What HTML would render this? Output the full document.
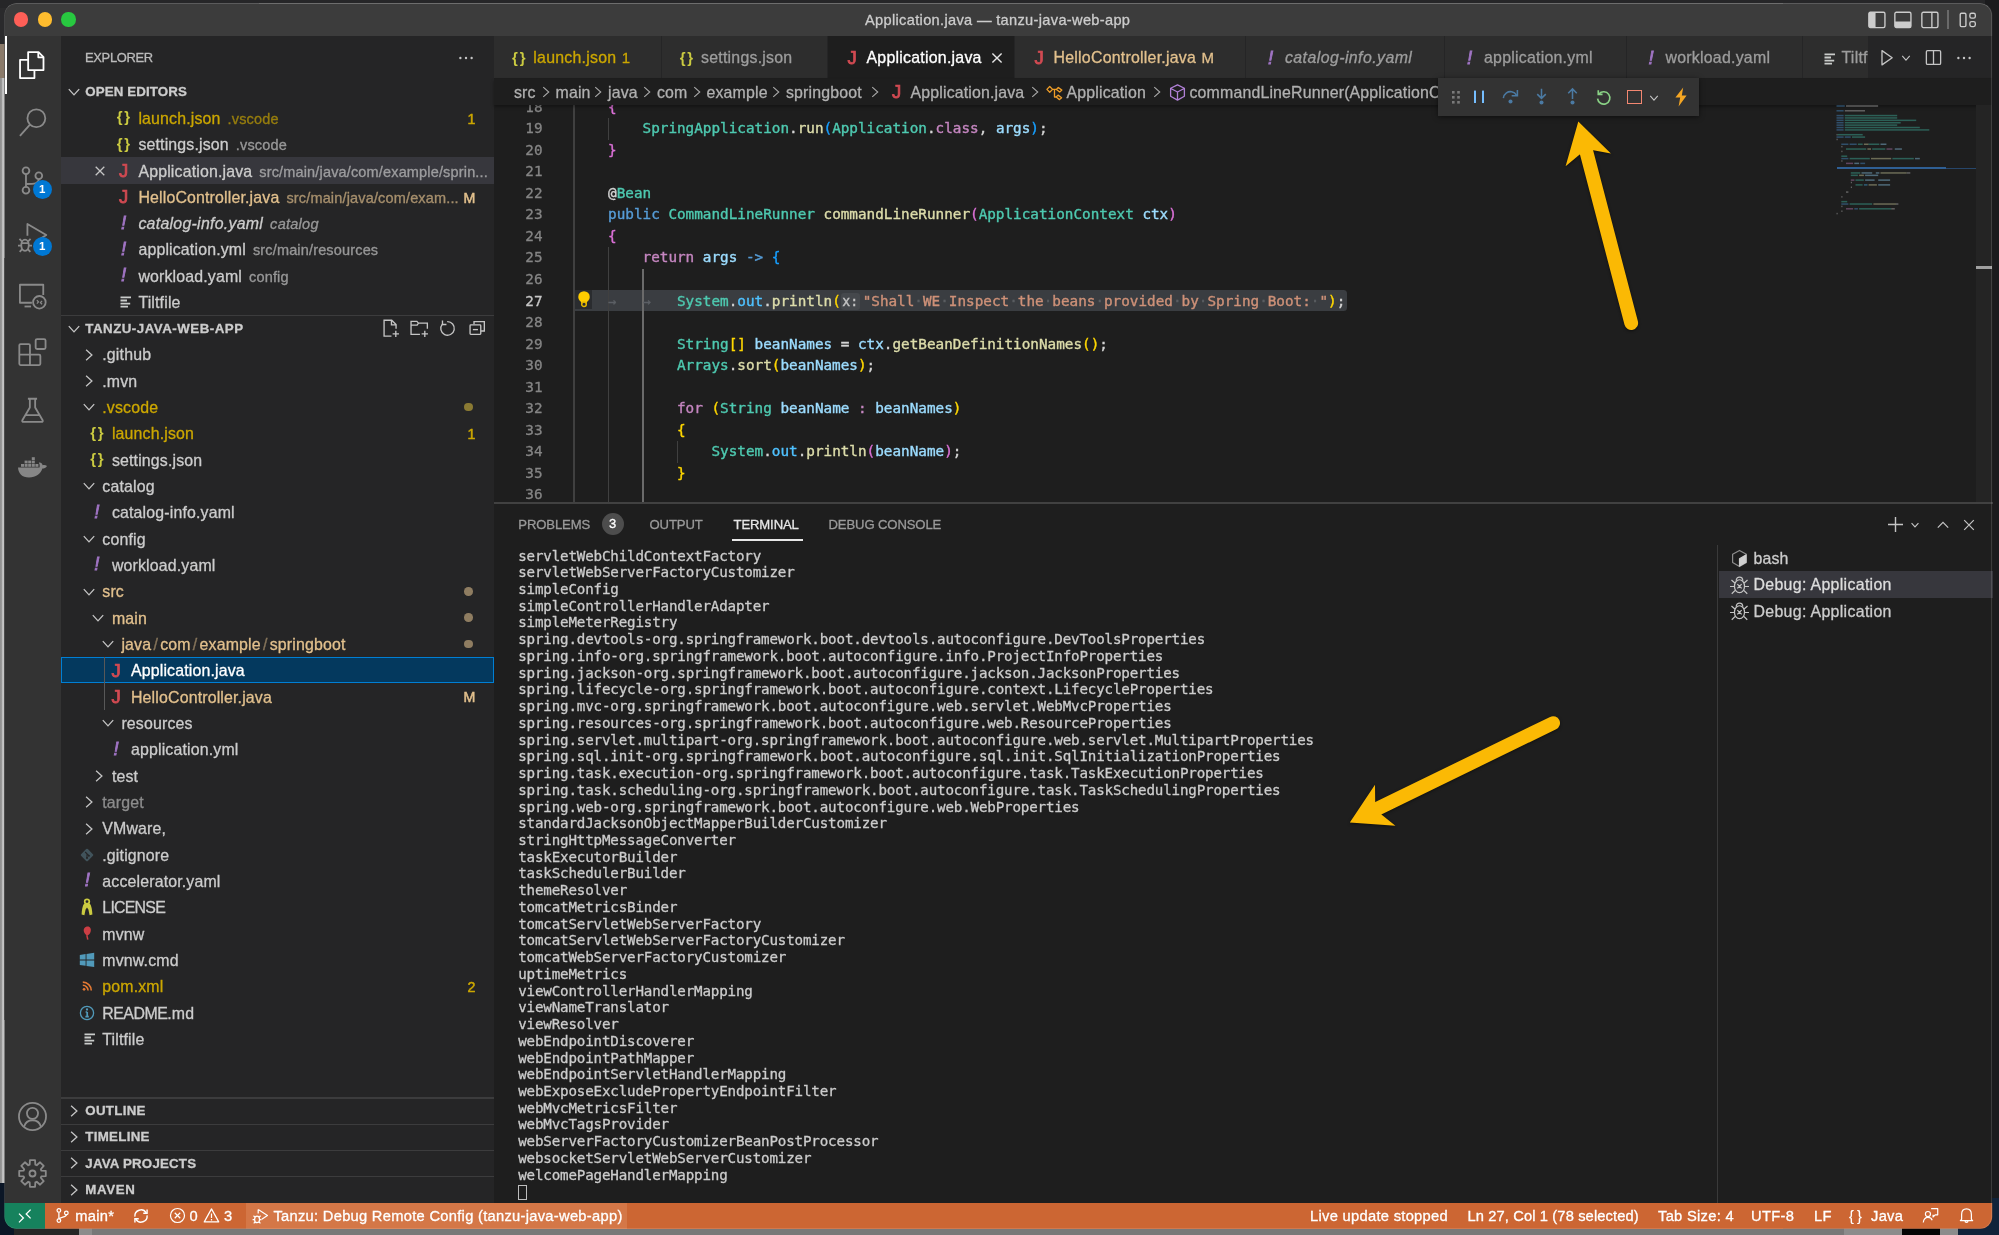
<!DOCTYPE html>
<html lang="en">
<head>
<meta charset="utf-8">
<title>Application.java — tanzu-java-web-app</title>
<style>
*{box-sizing:border-box;margin:0;padding:0}
html,body{width:1999px;height:1235px;overflow:hidden;background:#1c1c1c}
body{-webkit-text-stroke:.3px;position:relative;font-family:"Liberation Sans",sans-serif;color:#ccc;font-size:15.9px;letter-spacing:.16px;-webkit-font-smoothing:antialiased}
.abs{position:absolute}
.win{will-change:transform;position:absolute;left:0;top:0;width:1999px;height:1235px;clip-path:inset(3.2px 6.8px 6.2px 4.4px round 12px);background:#1e1e1e}
.titlebar{position:absolute;left:0;top:0;width:1999px;height:36.2px;background:#3c3c3c}
.title{position:absolute;left:865px;top:10px;height:20px;line-height:20px;font-size:14.6px;letter-spacing:.33px;color:#ccc;white-space:nowrap}
.tl{position:absolute;top:12.3px;width:14.4px;height:14.4px;border-radius:50%}
.actbar{position:absolute;left:0;top:36.2px;width:61.3px;height:1166.5px;background:#333}
.sidebar{position:absolute;left:61.3px;top:36.2px;width:433px;height:1166.5px;background:#252526}
.row{position:absolute;left:61.3px;width:433px;height:26.3px;line-height:26.3px;white-space:nowrap;overflow:hidden}
.row .lbl{position:absolute;top:1.2px}
.desc{opacity:.68;font-size:14.5px;margin-left:7px}
.hdr{position:absolute;left:61.3px;width:433px;height:26.3px;line-height:26.3px;font-size:13.3px;font-weight:700;letter-spacing:.3px;color:#ccc;white-space:nowrap}
.hdr span{position:absolute;left:24px;top:0.5px}
.sep{position:absolute;left:61.3px;width:433px;height:1.2px;background:#3c3c3d}
.ic{position:absolute}
svg{overflow:visible}
.mono{font-family:"DejaVu Sans Mono","Liberation Mono",monospace;letter-spacing:0}
.code{-webkit-text-stroke:.38px;position:absolute;left:573.6px;white-space:pre;font-family:"DejaVu Sans Mono","Liberation Mono",monospace;font-size:14.32px;letter-spacing:0;line-height:21.52px;height:21.52px;color:#d4d4d4}
.ln{-webkit-text-stroke:.3px;position:absolute;left:500px;width:42.5px;text-align:right;font-family:"DejaVu Sans Mono","Liberation Mono",monospace;font-size:14.32px;letter-spacing:0;line-height:21.52px;height:21.52px;color:#858585}
.term{-webkit-text-stroke:.3px;position:absolute;left:518.2px;white-space:pre;font-family:"DejaVu Sans Mono","Liberation Mono",monospace;font-size:14.2px;letter-spacing:-.165px;line-height:16.74px;color:#ccc}
.tab{position:absolute;top:36.2px;height:42.1px;line-height:41.8px;background:#2d2d2d;border-right:1.2px solid #252526;white-space:nowrap;overflow:hidden}
.tab .t{position:absolute;top:0}
.st{position:absolute;top:1202.6px;height:26.3px;line-height:26.3px;font-size:14.7px;letter-spacing:.3px;color:#fff;white-space:nowrap}
.k{color:#569cd6}.c{color:#c586c0}.t{color:#4ec9b0}.f{color:#dcdcaa}.v{color:#9cdcfe}.s{color:#ce9178}.o{color:#4fc1ff}
.b1{color:#ffd700}.b2{color:#da70d6}.b3{color:#179fff}
.y{color:#cca700}.m{color:#e2c08d}.ig{color:#8c8c8c}
</style>

<style>
.mm i{position:absolute;height:1.9px;opacity:.5}
.row i{font-style:normal;opacity:.5;margin:0 2.2px}
.ws{color:#5c6065}.ws u{text-decoration:none;font-size:13.5px;position:relative;top:0px;display:inline-block;width:8.62px}
.code b{font-weight:400;color:#5a5d61}
.hint{background:#45484c;color:#c4c4c4;border-radius:3px;font-size:13.2px;padding:1px 1.5px 1px 1.5px;margin:0 3px 0 0}
</style>
</head>
<body>
<div class="abs" style="left:0;top:0;width:1999px;height:8px;background:#262628"></div>
<div class="abs" style="left:0;top:78px;width:8px;height:1110px;background:linear-gradient(90deg,#8e8e8e 0,#9c9c9c 2px,#c4c4c4 2.6px)"></div>
<div class="abs" style="left:0;top:8px;width:8px;height:36px;background:#2a2a2c"></div>
<div class="abs" style="left:0;top:44px;width:8px;height:34px;background:#8a7a6a"></div>
<div class="abs" style="left:0;top:1183px;width:14px;height:52px;background:#0b1626"></div>
<div class="abs" style="left:14px;top:1222px;width:1945px;height:13px;background:#8c8c8c"></div>
<div class="abs" style="left:14px;top:1222px;width:65px;height:13px;background:#262626"></div>
<div class="abs" style="left:92px;top:1222px;width:1751.5px;height:13px;background:#787878"></div>
<div class="abs" style="left:1902.3px;top:1222px;width:37.5px;height:13px;background:#050505"></div>
<div class="abs" style="left:1958.3px;top:1198px;width:41px;height:37px;background:#11233a"></div>
<div class="abs" style="left:1985px;top:0;width:14px;height:1198px;background:#1b1b1d"></div>
<div class="win">
<div class="titlebar"></div>
<div class="tl" style="left:13.6px;background:#fe5f57"></div>
<div class="tl" style="left:37.5px;background:#febc2e"></div>
<div class="tl" style="left:61.4px;background:#28c840"></div>
<div class="title">Application.java — tanzu-java-web-app</div>
<svg class="abs" style="left:1866.8px;top:9.6px" width="19.8" height="19.8" viewBox="0 0 16 16"><rect x="1.5" y="1.8" width="13" height="12.4" rx="1.2" fill="none" stroke="#cccccc" stroke-width="1.1"/><path d="M1.5 3 Q1.5 1.8 2.7 1.8 H6.9 V14.2 H2.7 Q1.5 14.2 1.5 13Z" fill="#cccccc"/></svg><svg class="abs" style="left:1893.2px;top:9.6px" width="19.8" height="19.8" viewBox="0 0 16 16"><rect x="1.5" y="1.8" width="13" height="12.4" rx="1.2" fill="none" stroke="#cccccc" stroke-width="1.1"/><path d="M1.5 9.2 H14.5 V13 Q14.5 14.2 13.3 14.2 H2.7 Q1.5 14.2 1.5 13Z" fill="#cccccc"/></svg><svg class="abs" style="left:1919.6px;top:9.6px" width="19.8" height="19.8" viewBox="0 0 16 16"><rect x="1.5" y="1.8" width="13" height="12.4" rx="1.2" fill="none" stroke="#cccccc" stroke-width="1.1"/><path d="M9.6 1.8V14.2" stroke="#cccccc" stroke-width="1.1"/></svg><div class="abs" style="left:1947.4px;top:9.6px;width:1.2px;height:19.5px;background:#6a6a6a"></div><svg class="abs" style="left:1957.6px;top:9.6px" width="19.8" height="19.8" viewBox="0 0 16 16"><rect x="1.8" y="2.6" width="4.6" height="10.8" rx="1" fill="none" stroke="#cccccc" stroke-width="1.1"/><rect x="9.6" y="2.6" width="4.4" height="4" rx="1.4" fill="none" stroke="#cccccc" stroke-width="1.1"/><rect x="9.6" y="9.4" width="4.4" height="4" rx="1.4" fill="none" stroke="#cccccc" stroke-width="1.1"/></svg>
<div class="actbar"></div>
<div class="abs" style="left:4.5px;top:36.2px;width:2.4px;height:57.6px;background:#fff"></div>
<svg class="abs" style="left:18.3px;top:51.0px" width="29" height="29" viewBox="0 0 24 24" fill="none" stroke="#ffffff" stroke-width="1.5" stroke-linejoin="round"><path d="M8.4 15.8 V0.9 H17 L21.1 5 V15.8Z"/><path d="M16.8 1.1 V5.2 H20.9"/><path d="M8.2 7.3 H1.7 V22.4 H13.6 V16"/></svg>
<svg class="abs" style="left:18.3px;top:108.0px" width="29" height="29" viewBox="0 0 24 24" fill="none" stroke="#8a8a8a" stroke-width="1.5" stroke-linejoin="round"><circle cx="15.2" cy="8.5" r="7.4"/><path d="M9.9 13.8 L1.6 23.1"/></svg>
<svg class="abs" style="left:18.3px;top:165.5px" width="29" height="29" viewBox="0 0 24 24" fill="none" stroke="#8a8a8a" stroke-width="1.5" stroke-linejoin="round"><circle cx="6.6" cy="3.9" r="2.8"/><circle cx="6.6" cy="20.1" r="2.8"/><circle cx="17.2" cy="8" r="2.8"/><path d="M6.6 6.7 V17.3 M17.2 10.8 C17.2 14.9 13.5 14.9 6.8 14.9"/></svg>
<svg class="abs" style="left:18.3px;top:223.0px" width="29" height="29" viewBox="0 0 24 24" fill="none" stroke="#8a8a8a" stroke-width="1.5" stroke-linejoin="round"><path d="M7.8 10.6 V0.8 L23.4 10 L15.5 15"/><ellipse cx="5.8" cy="18.4" rx="3.1" ry="4.6"/><path d="M3.4 15.4 L1.2 13.2 M8.2 15.4 L10.4 13.2 M2.7 18.8 H0 M8.9 18.8 H11.6 M3.5 21.6 L1.4 23.8 M8.1 21.6 L10.2 23.8 M3 16.6 H8.6"/></svg>
<svg class="abs" style="left:18.3px;top:280.5px" width="29" height="29" viewBox="0 0 24 24" fill="none" stroke="#8a8a8a" stroke-width="1.5" stroke-linejoin="round"><path d="M11.5 18 H1.6 V3.1 H20.9 V11.6"/><path d="M5.4 21.1 H10.8"/><circle cx="17.7" cy="17.6" r="5.2"/><path d="M15.6 15.9 L17 17.3 L15.6 18.7 M19.9 16.5 L18.5 17.9 L19.9 19.3" stroke-width="1.1"/></svg>
<svg class="abs" style="left:18.3px;top:338.0px" width="29" height="29" viewBox="0 0 24 24" fill="none" stroke="#8a8a8a" stroke-width="1.5" stroke-linejoin="round"><path d="M2.1 5.1 H8.9 Q9.9 5.1 9.9 6.1 V13.8 H17.5 Q18.5 13.8 18.5 14.8 V21.4 Q18.5 22.4 17.5 22.4 H2.1 Q1.1 22.4 1.1 21.4 V6.1 Q1.1 5.1 2.1 5.1Z M9.9 13.8 V22.4 M1.1 13.8 H9.9"/><rect x="14.6" y="0.9" width="8.2" height="8.2" rx="1.2"/></svg>
<svg class="abs" style="left:18.3px;top:395.5px" width="29" height="29" viewBox="0 0 24 24" fill="none" stroke="#8a8a8a" stroke-width="1.5" stroke-linejoin="round"><path d="M8.2 2.3 H15.8 M9.8 2.3 V9.5 L3.6 20 C3.2 20.8 3.6 21.4 4.6 21.4 H19.4 C20.4 21.4 20.8 20.8 20.4 20 L14.2 9.5 V2.3 M6.6 15.8 H17.4"/></svg>
<svg class="abs" style="left:17.3px;top:456.0px" width="31" height="24" viewBox="0 0 31 24" fill="#868686"><path d="M1 11.5 H22.5 C23 9.5 22.6 8 21.8 6.8 C23.4 6 25.2 7.4 25.6 9.2 C27 8.8 28.8 9 30 10 C29 12 27 12.6 25.4 12.6 C23.5 18 19 21.5 12 21.5 C5 21.5 1.4 17.5 1 11.5Z"/><rect x="4" y="8" width="3" height="2.8"/><rect x="7.6" y="8" width="3" height="2.8"/><rect x="11.2" y="8" width="3" height="2.8"/><rect x="14.8" y="8" width="3" height="2.8"/><rect x="18.4" y="8" width="3" height="2.8"/><rect x="7.6" y="4.6" width="3" height="2.8"/><rect x="11.2" y="4.6" width="3" height="2.8"/><rect x="14.8" y="4.6" width="3" height="2.8"/><rect x="14.8" y="1.2" width="3" height="2.8"/></svg>
<div class="abs" style="left:32.8px;top:179.9px;width:19px;height:19px;border-radius:50%;background:#0078d4;color:#fff;font-size:11.5px;font-weight:700;-webkit-text-stroke:0;line-height:19px;text-align:center;letter-spacing:0">1</div>
<div class="abs" style="left:32.8px;top:237.3px;width:19px;height:19px;border-radius:50%;background:#0078d4;color:#fff;font-size:11.5px;font-weight:700;-webkit-text-stroke:0;line-height:19px;text-align:center;letter-spacing:0">1</div>
<svg class="abs" style="left:18.3px;top:1101.8px" width="29" height="29" viewBox="0 0 24 24" fill="none" stroke="#8a8a8a" stroke-width="1.5" stroke-linejoin="round"><circle cx="12" cy="12" r="11.2"/><circle cx="12" cy="9.4" r="4.6"/><path d="M5 20.4 C6.2 16.4 9 15.1 12 15.1 C15 15.1 17.8 16.4 19 20.4"/></svg>
<svg class="abs" style="left:18.3px;top:1159.0px" width="29" height="29" viewBox="0 0 24 24" fill="none" stroke="#8a8a8a" stroke-width="1.5" stroke-linejoin="round"><path d="M9.65 4.67 L9.88 1.00 L14.12 1.00 L14.35 4.67 L15.52 5.15 L18.28 2.73 L21.27 5.72 L18.85 8.48 L19.33 9.65 L23.00 9.88 L23.00 14.12 L19.33 14.35 L18.85 15.52 L21.27 18.28 L18.28 21.27 L15.52 18.85 L14.35 19.33 L14.12 23.00 L9.88 23.00 L9.65 19.33 L8.48 18.85 L5.72 21.27 L2.73 18.28 L5.15 15.52 L4.67 14.35 L1.00 14.12 L1.00 9.88 L4.67 9.65 L5.15 8.48 L2.73 5.72 L5.72 2.73 L8.48 5.15Z"/><circle cx="12" cy="12" r="2.5"/></svg>
<div class="sidebar"></div>
<div class="abs" style="left:85px;top:47px;height:21px;line-height:21px;font-size:12.9px;letter-spacing:-.3px;color:#bbbbbb">EXPLORER</div>
<svg class="abs" style="left:457px;top:49px" width="18" height="18" viewBox="0 0 16 16" fill="#c5c5c5"><circle cx="3" cy="8" r="1.05"/><circle cx="8" cy="8" r="1.05"/><circle cx="13" cy="8" r="1.05"/></svg>
<div class="hdr" style="top:78.5px;letter-spacing:0.12px"><span>OPEN EDITORS</span></div><svg class="abs" style="left:65.5px;top:84.0px" width="16" height="16" viewBox="0 0 16 16"><path d="M2.80 5.10 L8 10.90 L13.20 5.10" fill="none" stroke="#c5c5c5" stroke-width="1.3"/></svg>
<span class="abs" style="left:111.5px;top:104.4px;width:24px;height:26px;line-height:26px;text-align:center;font-size:15px;font-weight:700;-webkit-text-stroke:0;letter-spacing:1.7px;text-indent:1.7px;color:#cbcb41">{}</span>
<div class="row" style="top:104.8px"><span class="lbl y" style="left:77.1px;">launch.json<span class="desc">.vscode</span></span></div>
<div class="abs y" style="left:435px;top:105.6px;width:40.3px;height:26.3px;line-height:26.3px;text-align:right;font-size:14.2px;font-weight:400;-webkit-text-stroke:.5px;letter-spacing:0">1</div>
<span class="abs" style="left:111.5px;top:130.7px;width:24px;height:26px;line-height:26px;text-align:center;font-size:15px;font-weight:700;-webkit-text-stroke:0;letter-spacing:1.7px;text-indent:1.7px;color:#cbcb41">{}</span>
<div class="row" style="top:131.1px"><span class="lbl " style="left:77.1px;">settings.json<span class="desc">.vscode</span></span></div>
<div class="abs" style="left:61.3px;top:157.4px;width:433px;height:26.3px;background:#37373d"></div>
<svg class="abs" style="left:91.5px;top:162.9px" width="16" height="16" viewBox="0 0 16 16"><path d="M3.7 3.7 L12.3 12.3 M12.3 3.7 L3.7 12.3" fill="none" stroke="#c5c5c5" stroke-width="1.3"/></svg>
<span class="abs" style="left:111.5px;top:157.8px;width:24px;height:26px;line-height:26px;text-align:center;font-size:18.5px;font-weight:400;-webkit-text-stroke:.75px;letter-spacing:0;color:#d14a52">J</span>
<div class="row" style="top:157.4px"><span class="lbl " style="left:77.1px;">Application.java<span class="desc">src/main/java/com/example/sprin...</span></span></div>
<span class="abs" style="left:111.5px;top:184.1px;width:24px;height:26px;line-height:26px;text-align:center;font-size:18.5px;font-weight:400;-webkit-text-stroke:.75px;letter-spacing:0;color:#d14a52">J</span>
<div class="row" style="top:183.7px"><span class="lbl m" style="left:77.1px;">HelloController.java<span class="desc">src/main/java/com/exam...</span></span></div>
<div class="abs m" style="left:435px;top:184.5px;width:40.3px;height:26.3px;line-height:26.3px;text-align:right;font-size:14.2px;font-weight:400;-webkit-text-stroke:.5px;letter-spacing:0">M</div>
<span class="abs" style="left:111.5px;top:209.6px;width:24px;height:26px;line-height:26px;text-align:center;font-size:18.5px;font-weight:400;-webkit-text-stroke:.8px;font-style:italic;letter-spacing:0;color:#a074c4">!</span>
<div class="row" style="top:210.0px"><span class="lbl " style="left:77.1px;font-style:italic;letter-spacing:.27px;">catalog-info.yaml<span class="desc">catalog</span></span></div>
<span class="abs" style="left:111.5px;top:235.9px;width:24px;height:26px;line-height:26px;text-align:center;font-size:18.5px;font-weight:400;-webkit-text-stroke:.8px;font-style:italic;letter-spacing:0;color:#a074c4">!</span>
<div class="row" style="top:236.3px"><span class="lbl " style="left:77.1px;">application.yml<span class="desc">src/main/resources</span></span></div>
<span class="abs" style="left:111.5px;top:262.1px;width:24px;height:26px;line-height:26px;text-align:center;font-size:18.5px;font-weight:400;-webkit-text-stroke:.8px;font-style:italic;letter-spacing:0;color:#a074c4">!</span>
<div class="row" style="top:262.6px"><span class="lbl " style="left:77.1px;">workload.yaml<span class="desc">config</span></span></div>
<svg class="abs" style="left:119.3px;top:295.4px" width="14" height="14" viewBox="0 0 14 14"><path d="M1.5 2.4H12 M1.5 5.5H8 M1.5 8.6H11.2 M1.5 11.7H9" stroke="#c9ccca" stroke-width="1.8" fill="none"/></svg>
<div class="row" style="top:288.9px"><span class="lbl " style="left:77.1px;">Tiltfile</span></div>
<div class="sep" style="top:315.2px"></div>
<div class="hdr" style="top:315.2px;letter-spacing:0.5px"><span>TANZU-JAVA-WEB-APP</span></div><svg class="abs" style="left:65.5px;top:320.7px" width="16" height="16" viewBox="0 0 16 16"><path d="M2.80 5.10 L8 10.90 L13.20 5.10" fill="none" stroke="#c5c5c5" stroke-width="1.3"/></svg>
<svg class="abs" style="left:380.4px;top:318.2px" width="20.4" height="20.4" viewBox="0 0 16 16" fill="none" stroke="#c5c5c5" stroke-width="1.05"><path d="M9 14.2 H3.2 V1.8 H9.2 L12.6 5.2 V8.4 M9 2 V5.4 H12.4"/><path d="M12.4 10 V15 M9.9 12.5 H14.9"/></svg>
<svg class="abs" style="left:408.9px;top:318.2px" width="20.4" height="20.4" viewBox="0 0 16 16" fill="none" stroke="#c5c5c5" stroke-width="1.05"><path d="M8.6 12.8 H1.6 V2.6 H6.2 L7.4 4 H14.4 V8.4 M1.6 5.6 H6.4 L7.4 4"/><path d="M12.4 10 V15 M9.9 12.5 H14.9"/></svg>
<svg class="abs" style="left:437.4px;top:318.2px" width="20.4" height="20.4" viewBox="0 0 16 16" fill="none" stroke="#c5c5c5" stroke-width="1.05"><path d="M4.2 4.8 A5.3 5.3 0 1 0 8 2.9"/><path d="M4.3 2 V5.1 H7.4"/></svg>
<svg class="abs" style="left:466.9px;top:318.2px" width="20.4" height="20.4" viewBox="0 0 16 16" fill="none" stroke="#c5c5c5" stroke-width="1.05"><path d="M5.5 5 V2.8 H13.6 V10.2 H11"/><rect x="2.4" y="5.4" width="8.4" height="7.4" rx=".6"/><path d="M4.6 9.1 H8.6"/></svg>
<svg class="abs" style="left:81.3px;top:346.6px" width="16" height="16" viewBox="0 0 16 16"><path d="M5.10 2.80 L10.90 8 L5.10 13.20" fill="none" stroke="#c5c5c5" stroke-width="1.3"/></svg>
<div class="row" style="top:341.1px"><span class="lbl " style="left:41.0px;">.github</span></div>
<svg class="abs" style="left:81.3px;top:372.9px" width="16" height="16" viewBox="0 0 16 16"><path d="M5.10 2.80 L10.90 8 L5.10 13.20" fill="none" stroke="#c5c5c5" stroke-width="1.3"/></svg>
<div class="row" style="top:367.4px"><span class="lbl " style="left:41.0px;">.mvn</span></div>
<svg class="abs" style="left:80.8px;top:399.2px" width="16" height="16" viewBox="0 0 16 16"><path d="M2.80 5.10 L8 10.90 L13.20 5.10" fill="none" stroke="#c5c5c5" stroke-width="1.3"/></svg>
<div class="row" style="top:393.8px"><span class="lbl y" style="left:41.0px;">.vscode</span></div>
<div class="abs" style="left:464px;top:402.6px;width:8.6px;height:8.6px;border-radius:50%;background:#8a7a33"></div>
<span class="abs" style="left:84.9px;top:419.7px;width:24px;height:26px;line-height:26px;text-align:center;font-size:15px;font-weight:700;-webkit-text-stroke:0;letter-spacing:1.7px;text-indent:1.7px;color:#cbcb41">{}</span>
<div class="row" style="top:420.1px"><span class="lbl y" style="left:50.6px;">launch.json</span></div>
<div class="abs y" style="left:435px;top:420.9px;width:40.3px;height:26.336px;line-height:26.336px;text-align:right;font-size:14.2px;font-weight:400;-webkit-text-stroke:.5px;letter-spacing:0">1</div>
<span class="abs" style="left:84.9px;top:446.0px;width:24px;height:26px;line-height:26px;text-align:center;font-size:15px;font-weight:700;-webkit-text-stroke:0;letter-spacing:1.7px;text-indent:1.7px;color:#cbcb41">{}</span>
<div class="row" style="top:446.4px"><span class="lbl " style="left:50.6px;">settings.json</span></div>
<svg class="abs" style="left:80.8px;top:478.2px" width="16" height="16" viewBox="0 0 16 16"><path d="M2.80 5.10 L8 10.90 L13.20 5.10" fill="none" stroke="#c5c5c5" stroke-width="1.3"/></svg>
<div class="row" style="top:472.8px"><span class="lbl " style="left:41.0px;">catalog</span></div>
<span class="abs" style="left:84.9px;top:498.7px;width:24px;height:26px;line-height:26px;text-align:center;font-size:18.5px;font-weight:400;-webkit-text-stroke:.8px;font-style:italic;letter-spacing:0;color:#a074c4">!</span>
<div class="row" style="top:499.1px"><span class="lbl " style="left:50.6px;">catalog-info.yaml</span></div>
<svg class="abs" style="left:80.8px;top:530.9px" width="16" height="16" viewBox="0 0 16 16"><path d="M2.80 5.10 L8 10.90 L13.20 5.10" fill="none" stroke="#c5c5c5" stroke-width="1.3"/></svg>
<div class="row" style="top:525.5px"><span class="lbl " style="left:41.0px;">config</span></div>
<span class="abs" style="left:84.9px;top:551.4px;width:24px;height:26px;line-height:26px;text-align:center;font-size:18.5px;font-weight:400;-webkit-text-stroke:.8px;font-style:italic;letter-spacing:0;color:#a074c4">!</span>
<div class="row" style="top:551.8px"><span class="lbl " style="left:50.6px;">workload.yaml</span></div>
<svg class="abs" style="left:80.8px;top:583.6px" width="16" height="16" viewBox="0 0 16 16"><path d="M2.80 5.10 L8 10.90 L13.20 5.10" fill="none" stroke="#c5c5c5" stroke-width="1.3"/></svg>
<div class="row" style="top:578.1px"><span class="lbl m" style="left:41.0px;">src</span></div>
<div class="abs" style="left:464px;top:587.0px;width:8.6px;height:8.6px;border-radius:50%;background:#8f7d61"></div>
<svg class="abs" style="left:90.4px;top:609.9px" width="16" height="16" viewBox="0 0 16 16"><path d="M2.80 5.10 L8 10.90 L13.20 5.10" fill="none" stroke="#c5c5c5" stroke-width="1.3"/></svg>
<div class="row" style="top:604.5px"><span class="lbl m" style="left:50.6px;">main</span></div>
<div class="abs" style="left:464px;top:613.3px;width:8.6px;height:8.6px;border-radius:50%;background:#8f7d61"></div>
<svg class="abs" style="left:99.9px;top:636.3px" width="16" height="16" viewBox="0 0 16 16"><path d="M2.80 5.10 L8 10.90 L13.20 5.10" fill="none" stroke="#c5c5c5" stroke-width="1.3"/></svg>
<div class="row" style="top:630.8px"><span class="lbl m" style="left:60.1px;">java<i>/</i>com<i>/</i>example<i>/</i>springboot</span></div>
<div class="abs" style="left:464px;top:639.7px;width:8.6px;height:8.6px;border-radius:50%;background:#8f7d61"></div>
<div class="abs" style="left:61.3px;top:657.1px;width:433px;height:26.336px;background:#04395e;border:1.3px solid #007fd4"></div>
<span class="abs" style="left:104.0px;top:657.5px;width:24px;height:26px;line-height:26px;text-align:center;font-size:18.5px;font-weight:400;-webkit-text-stroke:.75px;letter-spacing:0;color:#d14a52">J</span>
<div class="row" style="top:657.1px"><span class="lbl " style="left:69.7px;color:#fff;">Application.java</span></div>
<span class="abs" style="left:104.0px;top:683.8px;width:24px;height:26px;line-height:26px;text-align:center;font-size:18.5px;font-weight:400;-webkit-text-stroke:.75px;letter-spacing:0;color:#d14a52">J</span>
<div class="row" style="top:683.5px"><span class="lbl m" style="left:69.7px;">HelloController.java</span></div>
<div class="abs m" style="left:435px;top:684.3px;width:40.3px;height:26.336px;line-height:26.336px;text-align:right;font-size:14.2px;font-weight:400;-webkit-text-stroke:.5px;letter-spacing:0">M</div>
<svg class="abs" style="left:99.9px;top:715.3px" width="16" height="16" viewBox="0 0 16 16"><path d="M2.80 5.10 L8 10.90 L13.20 5.10" fill="none" stroke="#c5c5c5" stroke-width="1.3"/></svg>
<div class="row" style="top:709.8px"><span class="lbl " style="left:60.1px;">resources</span></div>
<span class="abs" style="left:104.0px;top:735.7px;width:24px;height:26px;line-height:26px;text-align:center;font-size:18.5px;font-weight:400;-webkit-text-stroke:.8px;font-style:italic;letter-spacing:0;color:#a074c4">!</span>
<div class="row" style="top:736.1px"><span class="lbl " style="left:69.7px;">application.yml</span></div>
<svg class="abs" style="left:90.9px;top:767.9px" width="16" height="16" viewBox="0 0 16 16"><path d="M5.10 2.80 L10.90 8 L5.10 13.20" fill="none" stroke="#c5c5c5" stroke-width="1.3"/></svg>
<div class="row" style="top:762.5px"><span class="lbl " style="left:50.6px;">test</span></div>
<svg class="abs" style="left:81.3px;top:794.3px" width="16" height="16" viewBox="0 0 16 16"><path d="M5.10 2.80 L10.90 8 L5.10 13.20" fill="none" stroke="#c5c5c5" stroke-width="1.3"/></svg>
<div class="row" style="top:788.8px"><span class="lbl ig" style="left:41.0px;">target</span></div>
<svg class="abs" style="left:81.3px;top:820.6px" width="16" height="16" viewBox="0 0 16 16"><path d="M5.10 2.80 L10.90 8 L5.10 13.20" fill="none" stroke="#c5c5c5" stroke-width="1.3"/></svg>
<div class="row" style="top:815.1px"><span class="lbl " style="left:41.0px;">VMware,</span></div>
<svg class="abs" style="left:79.3px;top:846.7px" width="16" height="16" viewBox="0 0 16 16"><rect x="3.2" y="3.2" width="9.6" height="9.6" rx="1.2" transform="rotate(45 8 8)" fill="#41535b"/><path d="M6.2 5 L9.8 8.6 M8 6.6 V11" stroke="#252526" stroke-width="1.1" fill="none"/><circle cx="9.9" cy="8.7" r="1" fill="#252526"/><circle cx="8" cy="11" r="1" fill="#252526"/></svg>
<div class="row" style="top:841.5px"><span class="lbl " style="left:41.0px;">.gitignore</span></div>
<span class="abs" style="left:75.3px;top:867.4px;width:24px;height:26px;line-height:26px;text-align:center;font-size:18.5px;font-weight:400;-webkit-text-stroke:.8px;font-style:italic;letter-spacing:0;color:#a074c4">!</span>
<div class="row" style="top:867.8px"><span class="lbl " style="left:41.0px;">accelerator.yaml</span></div>
<svg class="abs" style="left:81.3px;top:898.1px" width="12" height="18" viewBox="0 0 12 18"><circle cx="6" cy="3.6" r="2.3" fill="none" stroke="#cbcb41" stroke-width="1.7"/><path d="M3.2 5.6 H8.8 C10.6 8 11.2 12 11.4 16.6 L8.6 17.2 L7.4 11.6 L6 9.6 L4.6 11.6 L3.4 17.2 L0.6 16.6 C0.8 12 1.4 8 3.2 5.6Z" fill="#cbcb41"/></svg>
<div class="row" style="top:894.2px"><span class="lbl " style="left:41.0px;"><span style="letter-spacing:-.75px">LICENSE</span></span></div>
<svg class="abs" style="left:81.3px;top:925.5px" width="12" height="16" viewBox="0 0 12 16"><path d="M6.6 0.6 C9.4 0.6 10.4 3.2 9.6 5.8 C9 7.8 7.6 9.2 6.4 9.6 C4.8 9 3.2 7.4 2.8 5.2 C2.4 2.8 4 0.6 6.6 0.6Z" fill="#cc3e44"/><path d="M6.2 9.2 C5.4 10.6 7 11.6 6.6 13.6" stroke="#cc3e44" stroke-width="1.5" fill="none"/></svg>
<div class="row" style="top:920.5px"><span class="lbl " style="left:41.0px;">mvnw</span></div>
<svg class="abs" style="left:79.3px;top:952.0px" width="16" height="16" viewBox="0 0 16 16"><path d="M0.8 3 L6.6 2.1 V7.5 H0.8Z M7.5 2 L15.2 0.8 V7.5 H7.5Z M0.8 8.4 H6.6 V13.8 L0.8 12.9Z M7.5 8.4 H15.2 V15.1 L7.5 13.9Z" fill="#519aba"/></svg>
<div class="row" style="top:946.8px"><span class="lbl " style="left:41.0px;">mvnw.cmd</span></div>
<svg class="abs" style="left:82.1px;top:980.9px" width="10.4" height="10.4" viewBox="0 0 13 13"><circle cx="2.6" cy="10.4" r="1.7" fill="#e37933"/><path d="M1 5.4 A6.6 6.6 0 0 1 7.6 12 M1 1.4 A10.6 10.6 0 0 1 11.6 12" fill="none" stroke="#e37933" stroke-width="2"/></svg>
<div class="row" style="top:973.2px"><span class="lbl y" style="left:41.0px;">pom.xml</span></div>
<div class="abs y" style="left:435px;top:974.0px;width:40.3px;height:26.336px;line-height:26.336px;text-align:right;font-size:14.2px;font-weight:400;-webkit-text-stroke:.5px;letter-spacing:0">2</div>
<svg class="abs" style="left:79.3px;top:1004.7px" width="16" height="16" viewBox="0 0 16 16"><circle cx="8" cy="8" r="6.6" fill="none" stroke="#519aba" stroke-width="1.3"/><path d="M8.2 6.9 V11.6 M6.4 11.7 H9.8 M6.6 7 H8.2" stroke="#519aba" stroke-width="1.7" fill="none"/><circle cx="8" cy="4.5" r="1.15" fill="#519aba"/></svg>
<div class="row" style="top:999.5px"><span class="lbl " style="left:41.0px;"><span style="letter-spacing:-.5px">README</span>.md</span></div>
<svg class="abs" style="left:83.1px;top:1032.4px" width="14" height="14" viewBox="0 0 14 14"><path d="M1.5 2.4H12 M1.5 5.5H8 M1.5 8.6H11.2 M1.5 11.7H9" stroke="#c9ccca" stroke-width="1.8" fill="none"/></svg>
<div class="row" style="top:1025.8px"><span class="lbl " style="left:41.0px;">Tiltfile</span></div>
<div class="abs" style="left:104.0px;top:657.1px;width:1.2px;height:52.7px;background:#585858"></div>
<div class="sep" style="top:1097.4px"></div>
<div class="hdr" style="top:1097.4px;letter-spacing:0.3px"><span>OUTLINE</span></div><svg class="abs" style="left:65.8px;top:1102.8px" width="16" height="16" viewBox="0 0 16 16"><path d="M5.10 2.80 L10.90 8 L5.10 13.20" fill="none" stroke="#c5c5c5" stroke-width="1.3"/></svg>
<div class="sep" style="top:1123.7px"></div>
<div class="hdr" style="top:1123.7px;letter-spacing:0.3px"><span>TIMELINE</span></div><svg class="abs" style="left:65.8px;top:1129.1px" width="16" height="16" viewBox="0 0 16 16"><path d="M5.10 2.80 L10.90 8 L5.10 13.20" fill="none" stroke="#c5c5c5" stroke-width="1.3"/></svg>
<div class="sep" style="top:1150.0px"></div>
<div class="hdr" style="top:1150.0px;letter-spacing:0.2px"><span>JAVA PROJECTS</span></div><svg class="abs" style="left:65.8px;top:1155.4px" width="16" height="16" viewBox="0 0 16 16"><path d="M5.10 2.80 L10.90 8 L5.10 13.20" fill="none" stroke="#c5c5c5" stroke-width="1.3"/></svg>
<div class="sep" style="top:1176.3px"></div>
<div class="hdr" style="top:1176.3px;letter-spacing:0.6px"><span>MAVEN</span></div><svg class="abs" style="left:65.8px;top:1181.7px" width="16" height="16" viewBox="0 0 16 16"><path d="M5.10 2.80 L10.90 8 L5.10 13.20" fill="none" stroke="#c5c5c5" stroke-width="1.3"/></svg>
<div class="abs" style="left:494.3px;top:36.2px;width:1500px;height:42.1px;background:#252526"></div>
<div class="tab" style="left:494.3px;width:167.7px;background:#2d2d2d"></div>
<span class="abs" style="left:506.8px;top:44.5px;width:24px;height:26px;line-height:26px;text-align:center;font-size:15px;font-weight:700;-webkit-text-stroke:0;letter-spacing:1.7px;text-indent:1.7px;color:#cbcb41">{}</span>
<div class="abs y" style="left:533.3px;top:36.7px;height:41.8px;line-height:42.4px;white-space:nowrap;letter-spacing:.24px;">launch.json<span style="margin-left:5.5px;font-size:15px">1</span></div>
<div class="tab" style="left:662px;width:165.5px;background:#2d2d2d"></div>
<span class="abs" style="left:674.5px;top:44.5px;width:24px;height:26px;line-height:26px;text-align:center;font-size:15px;font-weight:700;-webkit-text-stroke:0;letter-spacing:1.7px;text-indent:1.7px;color:#cbcb41">{}</span>
<div class="abs " style="left:701.0px;top:36.7px;height:41.8px;line-height:42.4px;white-space:nowrap;letter-spacing:.24px;color:#9d9d9d;">settings.json</div>
<div class="tab" style="left:827.5px;width:187.0px;background:#1e1e1e"></div>
<span class="abs" style="left:840.0px;top:45.3px;width:24px;height:26px;line-height:26px;text-align:center;font-size:18.5px;font-weight:400;-webkit-text-stroke:.75px;letter-spacing:0;color:#d14a52">J</span>
<div class="abs " style="left:866.5px;top:36.7px;height:41.8px;line-height:42.4px;white-space:nowrap;letter-spacing:.24px;color:#fff;">Application.java</div>
<svg class="abs" style="left:989.0px;top:49.9px" width="16" height="16" viewBox="0 0 16 16"><path d="M3.4000000000000004 3.4000000000000004 L12.6 12.6 M12.6 3.4000000000000004 L3.4000000000000004 12.6" fill="none" stroke="#e6e6e6" stroke-width="1.4"/></svg>
<div class="tab" style="left:1014.5px;width:231.5px;background:#2d2d2d"></div>
<span class="abs" style="left:1027.0px;top:45.3px;width:24px;height:26px;line-height:26px;text-align:center;font-size:18.5px;font-weight:400;-webkit-text-stroke:.75px;letter-spacing:0;color:#d14a52">J</span>
<div class="abs m" style="left:1053.5px;top:36.7px;height:41.8px;line-height:42.4px;white-space:nowrap;letter-spacing:.24px;">HelloController.java<span style="margin-left:5.5px;font-size:15px">M</span></div>
<div class="tab" style="left:1246px;width:199.0px;background:#2d2d2d"></div>
<span class="abs" style="left:1258.5px;top:44.5px;width:24px;height:26px;line-height:26px;text-align:center;font-size:18.5px;font-weight:400;-webkit-text-stroke:.8px;font-style:italic;letter-spacing:0;color:#a074c4">!</span>
<div class="abs " style="left:1285.0px;top:36.7px;height:41.8px;line-height:42.4px;white-space:nowrap;letter-spacing:.24px;color:#9d9d9d;font-style:italic;letter-spacing:.42px;">catalog-info.yaml</div>
<div class="tab" style="left:1445px;width:181.5px;background:#2d2d2d"></div>
<span class="abs" style="left:1457.5px;top:44.5px;width:24px;height:26px;line-height:26px;text-align:center;font-size:18.5px;font-weight:400;-webkit-text-stroke:.8px;font-style:italic;letter-spacing:0;color:#a074c4">!</span>
<div class="abs " style="left:1484.0px;top:36.7px;height:41.8px;line-height:42.4px;white-space:nowrap;letter-spacing:.24px;color:#9d9d9d;">application.yml</div>
<div class="tab" style="left:1626.5px;width:176.0px;background:#2d2d2d"></div>
<span class="abs" style="left:1639.0px;top:44.5px;width:24px;height:26px;line-height:26px;text-align:center;font-size:18.5px;font-weight:400;-webkit-text-stroke:.8px;font-style:italic;letter-spacing:0;color:#a074c4">!</span>
<div class="abs " style="left:1665.5px;top:36.7px;height:41.8px;line-height:42.4px;white-space:nowrap;letter-spacing:.24px;color:#9d9d9d;">workload.yaml</div>
<div class="tab" style="left:1802.5px;width:97.5px;background:#2d2d2d"></div>
<svg class="abs" style="left:1822.8px;top:51.5px" width="14" height="14" viewBox="0 0 14 14"><path d="M1.5 2.4H12 M1.5 5.5H8 M1.5 8.6H11.2 M1.5 11.7H9" stroke="#c9ccca" stroke-width="1.8" fill="none"/></svg>
<div class="abs " style="left:1841.5px;top:36.7px;height:41.8px;line-height:42.4px;white-space:nowrap;letter-spacing:.24px;color:#9d9d9d;">Tiltfile</div>
<div class="abs" style="left:1868px;top:36.2px;width:130px;height:42.1px;background:#252526"></div>
<svg class="abs" style="left:1877px;top:47.6px" width="19" height="19" viewBox="0 0 16 16" fill="none" stroke="#c5c5c5" stroke-width="1.1" stroke-linejoin="round"><path d="M4.2 2.2 L12.8 8.2 L4.2 14.2Z"/></svg>
<svg class="abs" style="left:1897.5px;top:50.1px" width="16" height="16" viewBox="0 0 16 16"><path d="M4.26 5.91 L8 10.09 L11.74 5.91" fill="none" stroke="#c5c5c5" stroke-width="1.1"/></svg>
<svg class="abs" style="left:1924px;top:48.1px" width="19" height="19" viewBox="0 0 16 16" fill="none" stroke="#c5c5c5" stroke-width="1.1"><rect x="2" y="2.2" width="12" height="11.6" rx="1"/><path d="M8 2.2V13.8"/></svg>
<svg class="abs" style="left:1955px;top:48.6px" width="18" height="18" viewBox="0 0 16 16" fill="#c5c5c5"><circle cx="3" cy="8" r="1.05"/><circle cx="8" cy="8" r="1.05"/><circle cx="13" cy="8" r="1.05"/></svg>
<div class="abs" style="left:574.6px;top:289.9px;width:772.9px;height:20.62px;background:#3a3d41;border-radius:0 3.5px 3.5px 0"></div>
<div class="abs" style="left:573.4px;top:96.8px;width:1.2px;height:408.9px;background:#404040"></div>
<div class="abs" style="left:607.9px;top:118.3px;width:1.2px;height:21.5px;background:#404040"></div>
<div class="abs" style="left:607.9px;top:247.4px;width:1.2px;height:258.2px;background:#404040"></div>
<div class="abs" style="left:642.4px;top:268.9px;width:1.2px;height:236.7px;background:#6a6a6a"></div>
<div class="abs" style="left:676.8px;top:441.1px;width:1.2px;height:21.5px;background:#404040"></div>
<div class="ln" style="top:96.8px;">18</div>
<div class="code" style="top:96.8px">    <span class="b2">{</span></div>
<div class="ln" style="top:118.3px;">19</div>
<div class="code" style="top:118.3px">        <span class="t">SpringApplication</span>.<span class="f">run</span><span class="b3">(</span><span class="t">Application</span>.<span class="c">class</span>, <span class="v">args</span><span class="b3">)</span>;</div>
<div class="ln" style="top:139.8px;">20</div>
<div class="code" style="top:139.8px">    <span class="b2">}</span></div>
<div class="ln" style="top:161.3px;">21</div>
<div class="ln" style="top:182.9px;">22</div>
<div class="code" style="top:182.9px">    @<span class="t">Bean</span></div>
<div class="ln" style="top:204.4px;">23</div>
<div class="code" style="top:204.4px">    <span class="k">public</span> <span class="t">CommandLineRunner</span> <span class="f">commandLineRunner</span><span class="b2">(</span><span class="t">ApplicationContext</span> <span class="v">ctx</span><span class="b2">)</span></div>
<div class="ln" style="top:225.9px;">24</div>
<div class="code" style="top:225.9px">    <span class="b2">{</span></div>
<div class="ln" style="top:247.4px;">25</div>
<div class="code" style="top:247.4px">        <span class="c">return</span> <span class="v">args</span> <span class="k">-&gt;</span> <span class="b3">{</span></div>
<div class="ln" style="top:268.9px;">26</div>
<div class="ln" style="top:290.5px;color:#c6c6c6;">27</div>
<div class="code" style="top:290.5px"><span class="ws">    <u>→</u>   <u>→</u>   </span><span class="t">System</span>.<span class="o">out</span>.<span class="f">println</span><span class="b1">(</span><span class="hint">x:</span><span class="s">"Shall<b>·</b>WE<b>·</b>Inspect<b>·</b>the<b>·</b>beans<b>·</b>provided<b>·</b>by<b>·</b>Spring<b>·</b>Boot:<b>·</b>"</span><span class="b1">)</span>;</div>
<div class="ln" style="top:312.0px;">28</div>
<div class="ln" style="top:333.5px;">29</div>
<div class="code" style="top:333.5px">            <span class="t">String</span><span class="b1">[]</span> <span class="v">beanNames</span> = <span class="v">ctx</span>.<span class="f">getBeanDefinitionNames</span><span class="b1">()</span>;</div>
<div class="ln" style="top:355.0px;">30</div>
<div class="code" style="top:355.0px">            <span class="t">Arrays</span>.<span class="f">sort</span><span class="b1">(</span><span class="v">beanNames</span><span class="b1">)</span>;</div>
<div class="ln" style="top:376.5px;">31</div>
<div class="ln" style="top:398.0px;">32</div>
<div class="code" style="top:398.0px">            <span class="c">for</span> <span class="b1">(</span><span class="t">String</span> <span class="v">beanName</span> <span class="c">:</span> <span class="v">beanNames</span><span class="b1">)</span></div>
<div class="ln" style="top:419.6px;">33</div>
<div class="code" style="top:419.6px">            <span class="b1">{</span></div>
<div class="ln" style="top:441.1px;">34</div>
<div class="code" style="top:441.1px">                <span class="t">System</span>.<span class="o">out</span>.<span class="f">println</span><span class="b2">(</span><span class="v">beanName</span><span class="b2">)</span>;</div>
<div class="ln" style="top:462.6px;">35</div>
<div class="code" style="top:462.6px">            <span class="b1">}</span></div>
<div class="ln" style="top:484.1px;">36</div>
<div class="abs" style="left:574.6px;top:289.9px;width:17.8px;height:19.1px;background:#2a2c2f"></div>
<svg class="abs" style="left:577.5px;top:290.8px" width="12" height="17" viewBox="0 0 12 17"><circle cx="6" cy="5.9" r="5.75" fill="#ffcc00"/><path d="M2.6 9.5 H9.4 L8.4 13 H3.6Z" fill="#ffcc00"/><circle cx="6" cy="13.2" r="2.3" fill="#2a2c2f" stroke="#e6b800" stroke-width="1.5"/></svg>
<div class="abs" style="left:494.3px;top:78.5px;width:1500px;height:26.3px;background:#1e1e1e;box-shadow:0 2px 3px rgba(0,0,0,.35)"></div>
<div class="abs" style="left:514px;top:78.5px;height:26.3px;line-height:28.2px;color:#b0b0b0;white-space:nowrap">src</div>
<div class="abs" style="left:555.5px;top:78.5px;height:26.3px;line-height:28.2px;color:#b0b0b0;white-space:nowrap">main</div>
<div class="abs" style="left:608px;top:78.5px;height:26.3px;line-height:28.2px;color:#b0b0b0;white-space:nowrap">java</div>
<div class="abs" style="left:657px;top:78.5px;height:26.3px;line-height:28.2px;color:#b0b0b0;white-space:nowrap">com</div>
<div class="abs" style="left:706.5px;top:78.5px;height:26.3px;line-height:28.2px;color:#b0b0b0;white-space:nowrap">example</div>
<div class="abs" style="left:786px;top:78.5px;height:26.3px;line-height:28.2px;color:#b0b0b0;white-space:nowrap">springboot</div>
<svg class="abs" style="left:537.5px;top:83.9px" width="16" height="16" viewBox="0 0 16 16"><path d="M5.25 3.06 L10.75 8 L5.25 12.94" fill="none" stroke="#a9a9a9" stroke-width="1.1"/></svg>
<svg class="abs" style="left:589.5px;top:83.9px" width="16" height="16" viewBox="0 0 16 16"><path d="M5.25 3.06 L10.75 8 L5.25 12.94" fill="none" stroke="#a9a9a9" stroke-width="1.1"/></svg>
<svg class="abs" style="left:639.0px;top:83.9px" width="16" height="16" viewBox="0 0 16 16"><path d="M5.25 3.06 L10.75 8 L5.25 12.94" fill="none" stroke="#a9a9a9" stroke-width="1.1"/></svg>
<svg class="abs" style="left:688.5px;top:83.9px" width="16" height="16" viewBox="0 0 16 16"><path d="M5.25 3.06 L10.75 8 L5.25 12.94" fill="none" stroke="#a9a9a9" stroke-width="1.1"/></svg>
<svg class="abs" style="left:767.5px;top:83.9px" width="16" height="16" viewBox="0 0 16 16"><path d="M5.25 3.06 L10.75 8 L5.25 12.94" fill="none" stroke="#a9a9a9" stroke-width="1.1"/></svg>
<svg class="abs" style="left:867.0px;top:83.9px" width="16" height="16" viewBox="0 0 16 16"><path d="M5.25 3.06 L10.75 8 L5.25 12.94" fill="none" stroke="#a9a9a9" stroke-width="1.1"/></svg>
<svg class="abs" style="left:1027.0px;top:83.9px" width="16" height="16" viewBox="0 0 16 16"><path d="M5.25 3.06 L10.75 8 L5.25 12.94" fill="none" stroke="#a9a9a9" stroke-width="1.1"/></svg>
<svg class="abs" style="left:1149.0px;top:83.9px" width="16" height="16" viewBox="0 0 16 16"><path d="M5.25 3.06 L10.75 8 L5.25 12.94" fill="none" stroke="#a9a9a9" stroke-width="1.1"/></svg>
<span class="abs" style="left:884.5px;top:79.0px;width:24px;height:26px;line-height:26px;text-align:center;font-size:18.5px;font-weight:400;-webkit-text-stroke:.75px;letter-spacing:0;color:#d14a52">J</span>
<div class="abs" style="left:910.5px;top:78.5px;height:26.3px;line-height:28.2px;color:#b0b0b0;white-space:nowrap">Application.java</div>
<svg class="abs" style="left:1044.5px;top:82.5px" width="19" height="19" viewBox="0 0 16 16" fill="none" stroke="#ee9d28" stroke-width="1.1" stroke-linejoin="round"><path d="M1.6 5.4 L4 3 L6.4 5.4 L4 7.8Z M9.6 5.4 L11.2 3.8 L14.2 6 L12.4 7.6Z M9.4 11.8 L11 10.2 L14 12.4 L12.2 14Z M6.4 5.4 H9.6 M8 5.4 V11.8 H9.4"/></svg>
<div class="abs" style="left:1066.5px;top:78.5px;height:26.3px;line-height:28.2px;color:#b0b0b0;white-space:nowrap">Application</div>
<svg class="abs" style="left:1167.5px;top:82.5px" width="19" height="19" viewBox="0 0 16 16" fill="none" stroke="#b180d7" stroke-width="1.1" stroke-linejoin="round"><path d="M8 1.6 L13.8 4.4 V11.2 L8 14.4 L2.2 11.2 V4.4Z M2.4 4.6 L8 7.6 L13.6 4.6 M8 7.6 V14.2"/></svg>
<div class="abs" style="left:1189.5px;top:78.5px;width:249px;overflow:hidden;height:26.3px;line-height:28.2px;color:#b0b0b0;white-space:nowrap">commandLineRunner(ApplicationContext)</div>
<svg class="abs" style="left:0;top:0;opacity:.62" width="1999" height="260" viewBox="0 0 1999 260"><rect x="1836.5" y="105.25" width="8.3" height="1.5" fill="#3b6d99"/><rect x="1846.0" y="105.25" width="32.1" height="1.5" fill="#8a8a8a"/><rect x="1836.5" y="110.03" width="7.1" height="1.5" fill="#3b6d99"/><rect x="1844.8" y="110.03" width="20.2" height="1.5" fill="#8a8a8a"/><rect x="1836.5" y="114.81" width="7.1" height="1.5" fill="#3b6d99"/><rect x="1844.8" y="114.81" width="52.4" height="1.5" fill="#35897a"/><rect x="1836.5" y="117.20" width="7.1" height="1.5" fill="#3b6d99"/><rect x="1844.8" y="117.20" width="52.4" height="1.5" fill="#35897a"/><rect x="1836.5" y="119.60" width="7.1" height="1.5" fill="#3b6d99"/><rect x="1844.8" y="119.60" width="71.4" height="1.5" fill="#35897a"/><rect x="1836.5" y="121.99" width="7.1" height="1.5" fill="#3b6d99"/><rect x="1844.8" y="121.99" width="55.9" height="1.5" fill="#35897a"/><rect x="1836.5" y="124.38" width="7.1" height="1.5" fill="#3b6d99"/><rect x="1844.8" y="124.38" width="52.4" height="1.5" fill="#35897a"/><rect x="1836.5" y="126.77" width="7.1" height="1.5" fill="#3b6d99"/><rect x="1844.8" y="126.77" width="75.0" height="1.5" fill="#35897a"/><rect x="1836.5" y="129.16" width="7.1" height="1.5" fill="#3b6d99"/><rect x="1844.8" y="129.16" width="84.5" height="1.5" fill="#35897a"/><rect x="1836.5" y="133.94" width="1.2" height="1.5" fill="#8a8a8a"/><rect x="1837.7" y="133.94" width="25.0" height="1.5" fill="#35897a"/><rect x="1836.5" y="136.33" width="7.1" height="1.5" fill="#3b6d99"/><rect x="1844.8" y="136.33" width="5.9" height="1.5" fill="#3b6d99"/><rect x="1852.0" y="136.33" width="13.1" height="1.5" fill="#35897a"/><rect x="1836.5" y="138.72" width="1.2" height="1.5" fill="#8a8a8a"/><rect x="1841.3" y="143.51" width="7.1" height="1.5" fill="#3b6d99"/><rect x="1849.6" y="143.51" width="7.1" height="1.5" fill="#3b6d99"/><rect x="1857.9" y="143.51" width="4.8" height="1.5" fill="#35897a"/><rect x="1863.9" y="143.51" width="4.8" height="1.5" fill="#9a9a78"/><rect x="1868.6" y="143.51" width="10.7" height="1.5" fill="#35897a"/><rect x="1880.5" y="143.51" width="5.9" height="1.5" fill="#6c98b0"/><rect x="1841.3" y="145.90" width="1.2" height="1.5" fill="#8a8a8a"/><rect x="1846.0" y="148.29" width="20.2" height="1.5" fill="#35897a"/><rect x="1867.4" y="148.29" width="3.6" height="1.5" fill="#9a9a78"/><rect x="1872.2" y="148.29" width="13.1" height="1.5" fill="#35897a"/><rect x="1886.5" y="148.29" width="5.9" height="1.5" fill="#8a5e88"/><rect x="1894.8" y="148.29" width="7.1" height="1.5" fill="#6c98b0"/><rect x="1841.3" y="150.68" width="1.2" height="1.5" fill="#8a8a8a"/><rect x="1841.3" y="155.46" width="5.9" height="1.5" fill="#35897a"/><rect x="1841.3" y="157.85" width="7.1" height="1.5" fill="#3b6d99"/><rect x="1849.6" y="157.85" width="20.2" height="1.5" fill="#35897a"/><rect x="1871.0" y="157.85" width="20.2" height="1.5" fill="#9a9a78"/><rect x="1892.4" y="157.85" width="21.4" height="1.5" fill="#35897a"/><rect x="1915.0" y="157.85" width="4.8" height="1.5" fill="#6c98b0"/><rect x="1841.3" y="160.24" width="1.2" height="1.5" fill="#8a8a8a"/><rect x="1846.0" y="162.63" width="7.1" height="1.5" fill="#8a5e88"/><rect x="1854.3" y="162.63" width="4.8" height="1.5" fill="#6c98b0"/><rect x="1860.3" y="162.63" width="4.8" height="1.5" fill="#3b6d99"/><rect x="1850.8" y="172.20" width="9.5" height="1.5" fill="#35897a"/><rect x="1861.5" y="172.20" width="10.7" height="1.5" fill="#6c98b0"/><rect x="1875.8" y="172.20" width="3.6" height="1.5" fill="#6c98b0"/><rect x="1880.5" y="172.20" width="26.2" height="1.5" fill="#9a9a78"/><rect x="1906.7" y="172.20" width="3.6" height="1.5" fill="#8a8a8a"/><rect x="1850.8" y="174.59" width="7.1" height="1.5" fill="#35897a"/><rect x="1859.1" y="174.59" width="4.8" height="1.5" fill="#9a9a78"/><rect x="1865.1" y="174.59" width="13.1" height="1.5" fill="#6c98b0"/><rect x="1850.8" y="179.37" width="3.6" height="1.5" fill="#8a5e88"/><rect x="1855.5" y="179.37" width="8.3" height="1.5" fill="#35897a"/><rect x="1865.1" y="179.37" width="9.5" height="1.5" fill="#6c98b0"/><rect x="1878.2" y="179.37" width="11.9" height="1.5" fill="#6c98b0"/><rect x="1850.8" y="181.76" width="1.2" height="1.5" fill="#8a8a8a"/><rect x="1855.5" y="184.15" width="7.1" height="1.5" fill="#35897a"/><rect x="1863.9" y="184.15" width="3.6" height="1.5" fill="#3b86b0"/><rect x="1868.6" y="184.15" width="8.3" height="1.5" fill="#9a9a78"/><rect x="1878.2" y="184.15" width="11.9" height="1.5" fill="#6c98b0"/><rect x="1850.8" y="186.54" width="1.2" height="1.5" fill="#8a8a8a"/><rect x="1846.0" y="191.33" width="2.4" height="1.5" fill="#8a8a8a"/><rect x="1841.3" y="196.11" width="1.2" height="1.5" fill="#8a8a8a"/><rect x="1841.3" y="200.89" width="5.9" height="1.5" fill="#35897a"/><rect x="1841.3" y="203.28" width="7.1" height="1.5" fill="#3b6d99"/><rect x="1849.6" y="203.28" width="22.6" height="1.5" fill="#35897a"/><rect x="1873.4" y="203.28" width="22.6" height="1.5" fill="#9a9a78"/><rect x="1896.0" y="203.28" width="2.4" height="1.5" fill="#8a8a8a"/><rect x="1841.3" y="205.67" width="1.2" height="1.5" fill="#8a8a8a"/><rect x="1846.0" y="208.06" width="7.1" height="1.5" fill="#8a5e88"/><rect x="1854.3" y="208.06" width="3.6" height="1.5" fill="#3b6d99"/><rect x="1859.1" y="208.06" width="32.1" height="1.5" fill="#35897a"/><rect x="1891.2" y="208.06" width="3.6" height="1.5" fill="#8a8a8a"/><rect x="1841.3" y="210.45" width="1.2" height="1.5" fill="#8a8a8a"/><rect x="1836.5" y="212.84" width="1.2" height="1.5" fill="#8a8a8a"/></svg>
<div class="abs" style="left:1836.5px;top:167.0px;width:109px;height:2.39px;background:#2f5f94"></div>
<div class="abs" style="left:1945.5px;top:167.5px;width:30px;height:1.4px;background:#27466a"></div>
<div class="abs" style="left:1975.5px;top:104.8px;width:1.2px;height:398px;background:#2a2a2a"></div>
<div class="abs" style="left:1976px;top:104.8px;width:16px;height:397.5px;background:#242424"></div>
<div class="abs" style="left:1976px;top:266.3px;width:16px;height:2.6px;background:#a0a0a0"></div>
<div class="abs" style="left:1438.2px;top:78.2px;width:260.6px;height:37.8px;background:#333333;box-shadow:0 1px 5px rgba(0,0,0,.55)"></div>
<svg class="abs" style="left:1452.4px;top:90.6px" width="8" height="13" viewBox="0 0 8 13" fill="#7a7a7a"><rect x="0" y="0" width="2.6" height="2.6"/><rect x="0" y="5" width="2.6" height="2.6"/><rect x="0" y="10" width="2.6" height="2.6"/><rect x="5.2" y="0" width="2.6" height="2.6"/><rect x="5.2" y="5" width="2.6" height="2.6"/><rect x="5.2" y="10" width="2.6" height="2.6"/></svg>
<svg class="abs" style="left:1473px;top:90.2px" width="12" height="14" viewBox="0 0 12 14" fill="#75beff"><rect x="1" y=".6" width="2" height="12.4"/><rect x="9" y=".6" width="2" height="12.4"/></svg>
<svg class="abs" style="left:1500.8px;top:87.2px" width="19" height="19" viewBox="0 0 16 16" fill="none" stroke="#4b7aa3" stroke-width="1.3"><path d="M2 9.4 C2.6 5.4 6 3.4 9 4 C10.8 4.4 12.2 5.4 13.2 7"/><path d="M13.8 2.6 V7.4 H9"/><circle cx="8" cy="12.2" r="1.7" fill="#4b7aa3" stroke="none"/></svg>
<svg class="abs" style="left:1531.5px;top:87.2px" width="19" height="19" viewBox="0 0 16 16" fill="none" stroke="#4b7aa3" stroke-width="1.3"><path d="M8 1.4 V9.4 M4.4 6 L8 9.6 L11.6 6"/><circle cx="8" cy="13" r="1.7" fill="#4b7aa3" stroke="none"/></svg>
<svg class="abs" style="left:1562.7px;top:87.2px" width="19" height="19" viewBox="0 0 16 16" fill="none" stroke="#4b7aa3" stroke-width="1.3"><path d="M8 10 V1.8 M4.4 5.2 L8 1.6 L11.6 5.2"/><circle cx="8" cy="13" r="1.7" fill="#4b7aa3" stroke="none"/></svg>
<svg class="abs" style="left:1594.2px;top:87.7px" width="19" height="19" viewBox="0 0 16 16" fill="none" stroke="#89d185" stroke-width="1.4"><path d="M4.2 5 A5.2 5.2 0 1 1 3 9"/><path d="M3.6 1.8 V5.4 H7.2"/></svg>
<div class="abs" style="left:1627.3px;top:90.0px;width:14.4px;height:14.4px;border:1.5px solid #f48771"></div>
<svg class="abs" style="left:1645.6px;top:89.8px" width="16" height="16" viewBox="0 0 16 16"><path d="M4.26 5.91 L8 10.09 L11.74 5.91" fill="none" stroke="#c5c5c5" stroke-width="1.1"/></svg>
<svg class="abs" style="left:1673.7px;top:87.2px" width="14" height="20" viewBox="0 0 14 20" fill="#f5a623"><path d="M9.2 0.4 L1.4 10.6 H6.2 L4.6 19.4 L12.6 8.4 H7.8Z"/></svg>
<div class="abs" style="left:494.3px;top:502.3px;width:1500px;height:701px;background:#1e1e1e"></div>
<div class="abs" style="left:494.3px;top:502.3px;width:1500px;height:1.3px;background:#414141"></div>
<div class="abs" style="left:518.3px;top:514.5px;height:20px;line-height:20px;font-size:13.1px;letter-spacing:-.12px;color:#9a9a9a;white-space:nowrap">PROBLEMS</div>
<div class="abs" style="left:601.6px;top:513.2px;width:22px;height:22px;border-radius:50%;background:#4d4d4d;color:#fff;font-size:13px;line-height:22px;text-align:center;letter-spacing:0">3</div>
<div class="abs" style="left:649.5px;top:514.5px;height:20px;line-height:20px;font-size:13.1px;letter-spacing:-.12px;color:#9a9a9a;white-space:nowrap">OUTPUT</div>
<div class="abs" style="left:733.5px;top:514.5px;height:20px;line-height:20px;font-size:13.1px;letter-spacing:-.12px;color:#e7e7e7;white-space:nowrap">TERMINAL</div>
<div class="abs" style="left:731.5px;top:539.3px;width:71px;height:1.3px;background:#e7e7e7"></div>
<div class="abs" style="left:828.5px;top:514.5px;height:20px;line-height:20px;font-size:13.1px;letter-spacing:-.12px;color:#9a9a9a;white-space:nowrap">DEBUG CONSOLE</div>
<svg class="abs" style="left:1886.5px;top:516.0px" width="17" height="17" viewBox="0 0 17 17"><path d="M8.5 1 V16 M1 8.5 H16" stroke="#c5c5c5" stroke-width="1.4"/></svg>
<svg class="abs" style="left:1907.3px;top:517.3px" width="16" height="16" viewBox="0 0 16 16"><path d="M4.57 6.09 L8 9.91 L11.43 6.09" fill="none" stroke="#c5c5c5" stroke-width="1.1"/></svg>
<svg class="abs" style="left:1934.7px;top:516.5px" width="16" height="16" viewBox="0 0 16 16"><path d="M2.8 10.6 L8 5.4 L13.2 10.6" fill="none" stroke="#c5c5c5" stroke-width="1.2"/></svg>
<svg class="abs" style="left:1961.2px;top:516.7px" width="16" height="16" viewBox="0 0 16 16"><path d="M3.2 3.2 L12.8 12.8 M12.8 3.2 L3.2 12.8" fill="none" stroke="#c5c5c5" stroke-width="1.2"/></svg>
<div class="term" style="top:547.5px">servletWebChildContextFactory
servletWebServerFactoryCustomizer
simpleConfig
simpleControllerHandlerAdapter
simpleMeterRegistry
spring.devtools-org.springframework.boot.devtools.autoconfigure.DevToolsProperties
spring.info-org.springframework.boot.autoconfigure.info.ProjectInfoProperties
spring.jackson-org.springframework.boot.autoconfigure.jackson.JacksonProperties
spring.lifecycle-org.springframework.boot.autoconfigure.context.LifecycleProperties
spring.mvc-org.springframework.boot.autoconfigure.web.servlet.WebMvcProperties
spring.resources-org.springframework.boot.autoconfigure.web.ResourceProperties
spring.servlet.multipart-org.springframework.boot.autoconfigure.web.servlet.MultipartProperties
spring.sql.init-org.springframework.boot.autoconfigure.sql.init.SqlInitializationProperties
spring.task.execution-org.springframework.boot.autoconfigure.task.TaskExecutionProperties
spring.task.scheduling-org.springframework.boot.autoconfigure.task.TaskSchedulingProperties
spring.web-org.springframework.boot.autoconfigure.web.WebProperties
standardJacksonObjectMapperBuilderCustomizer
stringHttpMessageConverter
taskExecutorBuilder
taskSchedulerBuilder
themeResolver
tomcatMetricsBinder
tomcatServletWebServerFactory
tomcatServletWebServerFactoryCustomizer
tomcatWebServerFactoryCustomizer
uptimeMetrics
viewControllerHandlerMapping
viewNameTranslator
viewResolver
webEndpointDiscoverer
webEndpointPathMapper
webEndpointServletHandlerMapping
webExposeExcludePropertyEndpointFilter
webMvcMetricsFilter
webMvcTagsProvider
webServerFactoryCustomizerBeanPostProcessor
websocketServletWebServerCustomizer
welcomePageHandlerMapping</div>
<div class="abs" style="left:518.4px;top:1185.1px;width:8.3px;height:15.2px;border:1.2px solid #bdbdbd"></div>
<div class="abs" style="left:1717.3px;top:545px;width:1.2px;height:658px;background:#3a3a3a"></div>
<div class="abs" style="left:1718.5px;top:571.3px;width:275px;height:26.3px;background:#37373d"></div>
<svg class="abs" style="left:1730.0px;top:548.5px" width="19" height="19" viewBox="0 0 16 16" fill="none" stroke="#8e8e8e" stroke-width="1" stroke-linejoin="round"><path d="M8 1.2 L13.8 4.4 V11.4 L8 14.8 L2.2 11.4 V4.4Z"/><path d="M8 14.4 V8.2 L13.4 5 V11.2Z" fill="#d0d0d0" stroke="#d0d0d0"/></svg>
<div class="abs" style="left:1753.5px;top:546px;height:26.3px;line-height:26.6px;white-space:nowrap;color:#ccc">bash</div>
<svg class="abs" style="left:1728.0px;top:572.8px" width="23" height="23" viewBox="0 0 16 16" fill="none" stroke="#c5c5c5" stroke-width=".85"><ellipse cx="8" cy="9.2" rx="3.5" ry="4.5"/><path d="M5.7 5.4 C5.7 2 10.3 2 10.3 5.4 M4.8 6.9 L2.4 4.9 M11.2 6.9 L13.6 4.9 M4.5 9.4 H1.4 M11.5 9.4 H14.6 M5 12.1 L2.6 14.4 M11 12.1 L13.4 14.4 M6.5 7.7 L9.5 10.7 M9.5 7.7 L6.5 10.7"/></svg>
<div class="abs" style="left:1753.5px;top:572.3px;height:26.3px;line-height:26.6px;white-space:nowrap;color:#ddd;letter-spacing:.32px">Debug: Application</div>
<svg class="abs" style="left:1728.0px;top:599.1px" width="23" height="23" viewBox="0 0 16 16" fill="none" stroke="#c5c5c5" stroke-width=".85"><ellipse cx="8" cy="9.2" rx="3.5" ry="4.5"/><path d="M5.7 5.4 C5.7 2 10.3 2 10.3 5.4 M4.8 6.9 L2.4 4.9 M11.2 6.9 L13.6 4.9 M4.5 9.4 H1.4 M11.5 9.4 H14.6 M5 12.1 L2.6 14.4 M11 12.1 L13.4 14.4 M6.5 7.7 L9.5 10.7 M9.5 7.7 L6.5 10.7"/></svg>
<div class="abs" style="left:1753.5px;top:598.6px;height:26.3px;line-height:26.6px;white-space:nowrap;color:#ccc;letter-spacing:.32px">Debug: Application</div>
<div class="abs" style="left:0;top:1202.6px;width:1999px;height:30px;background:#cc6633"></div>
<div class="abs" style="left:0;top:1202.6px;width:44.6px;height:30px;background:#16825d"></div>
<div class="abs" style="left:246px;top:1202.6px;width:381.3px;height:30px;background:#d47747"></div>
<svg class="abs" style="left:16.8px;top:1207.8px" width="16" height="16" viewBox="0 0 16 16" fill="none" stroke="#ffffff" stroke-width="1.3"><path d="M2 5.6 L6.4 10 L2 14.4 M13.6 1.6 L9.2 6 L13.6 10.4"/></svg>
<svg class="abs" style="left:53.5px;top:1207.3px" width="17" height="17" viewBox="0 0 16 16" fill="none" stroke="#ffffff" stroke-width="1.2"><circle cx="4.6" cy="3.2" r="1.7"/><circle cx="4.6" cy="12.8" r="1.7"/><circle cx="11.6" cy="5.6" r="1.7"/><path d="M4.6 4.9 V11.1 M11.6 7.3 C11.6 9.8 6.4 9.2 4.8 11.2"/></svg>
<div class="st" style="left:75.3px">main*</div>
<svg class="abs" style="left:132.3px;top:1206.8px" width="18" height="18" viewBox="0 0 16 16" fill="none" stroke="#ffffff" stroke-width="1.25"><path d="M2.6 8.6 A5.4 5.4 0 0 1 12.6 5.2 M13.4 7.4 A5.4 5.4 0 0 1 3.4 10.8"/><path d="M13.4 2.2 V5.6 H10 M2.6 13.8 V10.4 H6" /></svg>
<svg class="abs" style="left:168.8px;top:1207.3px" width="17" height="17" viewBox="0 0 16 16" fill="none" stroke="#ffffff" stroke-width="1.15"><circle cx="8" cy="8" r="6.6"/><path d="M5.4 5.4 L10.6 10.6 M10.6 5.4 L5.4 10.6"/></svg>
<div class="st" style="left:189.5px">0</div>
<svg class="abs" style="left:202.8px;top:1207.0px" width="17" height="17" viewBox="0 0 16 16" fill="none" stroke="#ffffff" stroke-width="1.15" stroke-linejoin="round"><path d="M8 1.8 L14.8 14 H1.2Z"/><path d="M8 6 V10.4 M8 11.4 V12.8"/></svg>
<div class="st" style="left:224px">3</div>
<svg class="abs" style="left:250.5px;top:1207.3px" width="18" height="18" viewBox="0 0 16 16" fill="none" stroke="#ffffff" stroke-width="1.1" stroke-linejoin="round"><path d="M6.4 2.2 L14.6 7.6 L9.6 10.8 M6.4 2.2 V5.8"/><ellipse cx="5.4" cy="11" rx="2.2" ry="2.9"/><path d="M3.6 9 L2.2 7.8 M7.2 9 L8.6 7.8 M3.2 11.2 H1.4 M7.6 11.2 H9.4 M3.7 13.2 L2.4 14.6 M7.1 13.2 L8.4 14.6"/></svg>
<div class="st" style="left:273.4px;letter-spacing:.29px">Tanzu: Debug Remote Config (tanzu-java-web-app)</div>
<div class="st" style="left:1310px">Live update stopped</div>
<div class="st" style="left:1467.5px;letter-spacing:.12px">Ln 27, Col 1 (78 selected)</div>
<div class="st" style="left:1658px">Tab Size: 4</div>
<div class="st" style="left:1751px">UTF-8</div>
<div class="st" style="left:1814px">LF</div>
<div class="st" style="left:1849px;font-size:14.6px;letter-spacing:3.2px;-webkit-text-stroke:.1px">{}</div>
<div class="st" style="left:1871px">Java</div>
<svg class="abs" style="left:1921.5px;top:1207.3px" width="17" height="17" viewBox="0 0 16 16" fill="none" stroke="#ffffff" stroke-width="1.1" stroke-linejoin="round"><circle cx="5.6" cy="6.6" r="2.4"/><path d="M1.2 14.6 C1.6 11.2 3.6 9.8 5.6 9.8 C7.6 9.8 9 10.8 9.6 12.4"/><path d="M8.6 1.6 H14.8 V7.4 H12.4 L10.4 9.4 V7.4"/></svg>
<svg class="abs" style="left:1957.5px;top:1207.3px" width="17" height="17" viewBox="0 0 16 16" fill="none" stroke="#ffffff" stroke-width="1.15" stroke-linejoin="round"><path d="M3.4 11.6 V7 C3.4 3.8 5.4 1.8 8 1.8 C10.6 1.8 12.6 3.8 12.6 7 V11.6 L13.8 12.8 H2.2Z M6.6 13 C6.6 15 9.4 15 9.4 13"/></svg>
<svg class="abs" style="left:0;top:0;filter:drop-shadow(0 1px 1.5px rgba(0,0,0,.5))" width="1999" height="1235" viewBox="0 0 1999 1235"><path d="M1586.5 152.3 L1631.2 323.1" stroke="#fbb904" stroke-width="13.8" stroke-linecap="round" fill="none"/><path d="M1578.3 121.6 L1565.6 166.2 L1579.7 154.6 L1593.4 150.2 L1610.9 153.4Z" fill="#fbb904"/><path d="M1378.3 808.2 L1553.1 723.1" stroke="#fbb904" stroke-width="13.8" stroke-linecap="round" fill="none"/><path d="M1349.8 822.4 L1375 784.8 L1375.2 801.8 L1381.4 814.6 L1395.4 825.7Z" fill="#fbb904"/></svg>
<div class="abs" style="left:4.4px;top:3.2px;width:1987.8px;height:1225.6px;border-radius:12px;border:1.2px solid rgba(255,255,255,.13);border-top-color:rgba(255,255,255,.25)"></div>
</div>
</body></html>
